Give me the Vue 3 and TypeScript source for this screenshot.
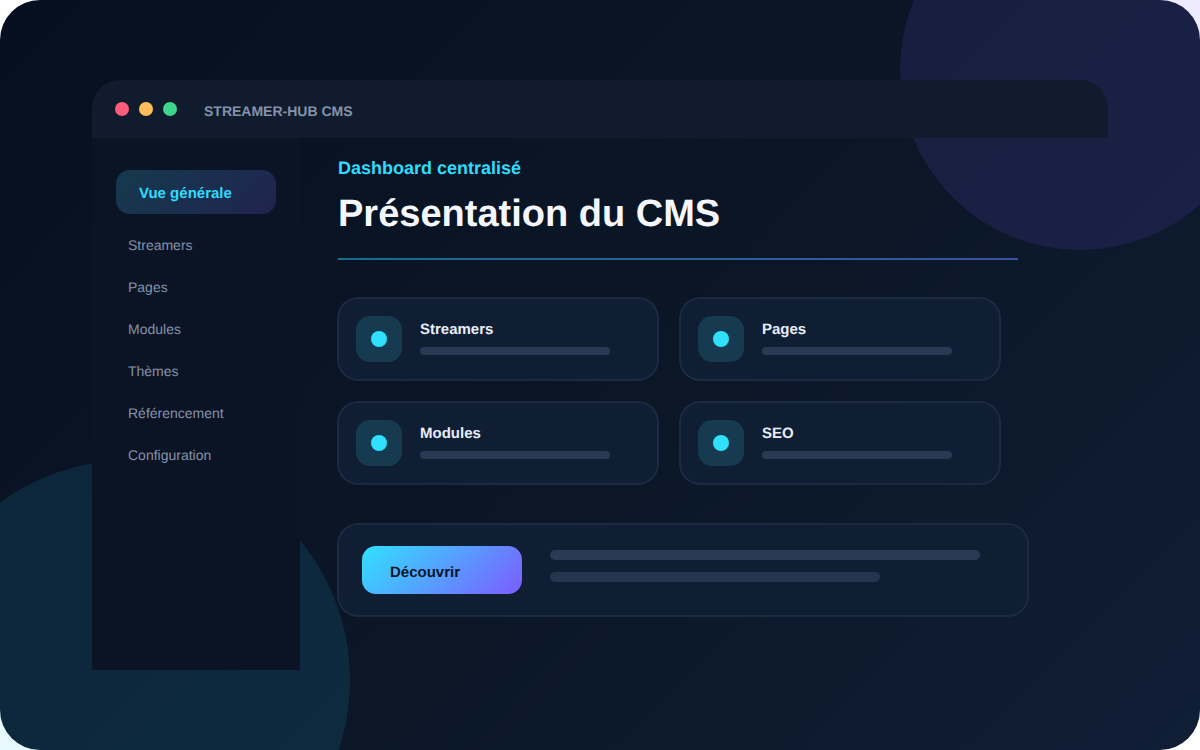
<script setup lang="ts">
const navItems = ['Streamers', 'Pages', 'Modules', 'Thèmes', 'Référencement', 'Configuration']
const cards = ['Streamers', 'Pages', 'Modules', 'SEO']
</script>

<template>
  <div class="page">
    <div class="frame">
      <div class="window">
        <header class="titlebar">
          <span class="dot red"></span>
          <span class="dot yellow"></span>
          <span class="dot green"></span>
          <span class="app-name">STREAMER-HUB CMS</span>
        </header>
        <div class="body">
          <aside class="sidebar">
            <div class="nav-active">Vue générale</div>
            <div v-for="item in navItems" :key="item" class="nav-item">{{ item }}</div>
          </aside>
          <main class="content">
            <div class="eyebrow">Dashboard centralisé</div>
            <h1>Présentation du CMS</h1>
            <div class="divider"></div>
            <div class="cards">
              <div v-for="card in cards" :key="card" class="card">
                <div class="icon-box"><span class="icon-dot"></span></div>
                <div class="card-text">
                  <div class="card-title">{{ card }}</div>
                  <div class="card-bar"></div>
                </div>
              </div>
            </div>
            <div class="cta">
              <div class="cta-button">Découvrir</div>
              <div class="cta-lines">
                <div class="line long"></div>
                <div class="line short"></div>
              </div>
            </div>
          </main>
        </div>
      </div>
    </div>
    <div class="blob blob-purple"></div>
    <div class="blob blob-cyan"></div>
  </div>
</template>

<style>
html,
body {
  margin: 0;
  background: #fff;
}
</style>

<style scoped>
.page {
  position: relative;
  width: 1200px;
  height: 750px;
  overflow: hidden;
  font-family: 'Liberation Sans', Arial, sans-serif;
  text-rendering: geometricPrecision;
}

.frame {
  width: 1200px;
  height: 750px;
  box-sizing: border-box;
  padding: 80px 92px;
  border-radius: 40px;
  background: linear-gradient(135deg, #060f1f 0%, #0b1727 55%, #101e36 100%);
}

.blob {
  position: absolute;
  border-radius: 50%;
  pointer-events: none;
}

.blob-purple {
  top: -110px;
  right: -60px;
  width: 360px;
  height: 360px;
  background: rgba(124, 92, 255, 0.12);
}

.blob-cyan {
  left: -90px;
  bottom: -150px;
  width: 440px;
  height: 440px;
  background: rgba(49, 200, 255, 0.11);
}

.window {
  position: relative;
  z-index: 1;
  width: 1016px;
  height: 590px;
  display: flex;
  flex-direction: column;
}

.titlebar {
  height: 58px;
  flex: none;
  display: flex;
  align-items: center;
  padding: 0 23px;
  border-radius: 28px 28px 0 0;
  background: #101c2e;
  box-sizing: border-box;
}

.dot {
  width: 14px;
  height: 14px;
  border-radius: 50%;
  margin-right: 10px;
}

.red { background: #ff5c7c; }
.yellow { background: #ffbd59; }
.green { background: #3dd68c; }

.app-name {
  margin-left: 17px;
  margin-top: 4px;
  font-size: 14px;
  font-weight: 700;
  color: #8492aa;
}

.body {
  flex: 1;
  display: flex;
  min-height: 0;
}

.sidebar {
  width: 208px;
  flex: none;
  box-sizing: border-box;
  padding: 32px 24px;
  background: #0b1424;
}

.nav-active {
  width: 160px;
  height: 44px;
  box-sizing: border-box;
  padding-left: 23px;
  line-height: 47px;
  margin-bottom: 10px;
  border-radius: 14px;
  background: linear-gradient(135deg, #153a4e 0%, #20234f 100%);
  color: #2fdcff;
  font-size: 15px;
  font-weight: 700;
}

.nav-item {
  height: 42px;
  line-height: 42px;
  padding-left: 12px;
  font-size: 14px;
  color: #8492aa;
}

.content {
  flex: 1;
  padding: 19px 0 0 38px;
}

.eyebrow {
  font-size: 18px;
  line-height: 22px;
  font-weight: 700;
  color: #2fdcff;
}

h1 {
  margin: 12px 0 0;
  font-size: 38px;
  line-height: 46px;
  font-weight: 700;
  color: #f5f7ff;
}

.divider {
  width: 680px;
  height: 2px;
  margin-top: 21px;
  background: linear-gradient(90deg, #186c90 0%, #3b52a0 100%);
}

.cards {
  display: grid;
  grid-template-columns: 320px 320px;
  gap: 22px;
  margin-top: 38px;
}

.card {
  height: 82px;
  box-sizing: border-box;
  display: flex;
  padding: 18px;
  border-radius: 20px;
  background: #101e34;
  box-shadow: 0 0 0 0.75px #20304a, inset 0 0 0 0.75px #20304a;
}

.icon-box {
  width: 46px;
  height: 46px;
  flex: none;
  display: flex;
  align-items: center;
  justify-content: center;
  border-radius: 14px;
  background: #163a50;
}

.icon-dot {
  width: 16px;
  height: 16px;
  border-radius: 50%;
  background: #2fe0ff;
}

.card-text {
  margin: 3px 0 0 18px;
}

.card-title {
  font-size: 15px;
  line-height: 20px;
  font-weight: 700;
  color: #e8edf8;
  padding-top: 1px;
}

.card-bar {
  width: 190px;
  height: 8px;
  margin-top: 7px;
  border-radius: 4px;
  background: #2a3a54;
}

.cta {
  width: 690px;
  height: 92px;
  box-sizing: border-box;
  display: flex;
  margin-top: 40px;
  padding: 22px 24px;
  border-radius: 20px;
  background: #101e34;
  box-shadow: 0 0 0 0.75px #20304a, inset 0 0 0 0.75px #20304a;
}

.cta-button {
  width: 160px;
  height: 48px;
  flex: none;
  box-sizing: border-box;
  padding-left: 28px;
  line-height: 54px;
  border-radius: 14px;
  background: linear-gradient(135deg, #31e1ff 0%, #7c5cff 100%);
  color: #0a1628;
  font-size: 15px;
  font-weight: 700;
}

.cta-lines {
  margin: 4px 0 0 28px;
}

.line {
  height: 10px;
  border-radius: 5px;
  background: #2a3a54;
}

.line.long {
  width: 430px;
}

.line.short {
  width: 330px;
  margin-top: 12px;
  background: #26344d;
}
</style>
